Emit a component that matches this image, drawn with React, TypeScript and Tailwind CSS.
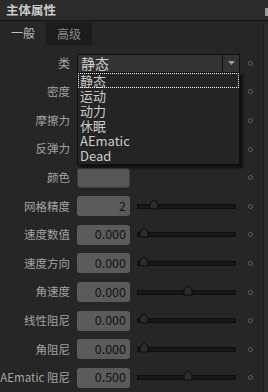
import React from "react";

type Row = {
  label: string;
  value?: string;
  slider?: number; // thumb x offset within track
  kind?: "input" | "color" | "hidden";
};

const rows: Row[] = [
  { label: "密度", kind: "hidden" },
  { label: "摩擦力", kind: "hidden" },
  { label: "反弹力", kind: "hidden" },
  { label: "颜色", kind: "color" },
  { label: "网格精度", value: "2", slider: 16 },
  { label: "速度数值", value: "0.000", slider: 6 },
  { label: "速度方向", value: "0.000", slider: 6 },
  { label: "角速度", value: "0.000", slider: 50 },
  { label: "线性阻尼", value: "0.000", slider: 6 },
  { label: "角阻尼", value: "0.000", slider: 6 },
  { label: "AEmatic 阻尼", value: "0.500", slider: 50 },
];

const options = ["静态", "运动", "动力", "休眠", "AEmatic", "Dead"];

function Dot() {
  return (
    <div className="w-[5px] h-[5px] rounded-full border border-[#5e5e5e] ml-[8px]" />
  );
}

function Slider({ pos }: { pos: number }) {
  return (
    <div className="relative w-[99px] h-[5px] ml-[7px] bg-[#171717] border border-[#0e0e0e]">
      <svg
        className="absolute -top-[6px]"
        style={{ left: pos - 5 }}
        width="10"
        height="11"
        viewBox="0 0 10 11"
      >
        <path d="M1 4.5 L5 0.8 L9 4.5 L9 10 L1 10 Z" fill="#2c2c2c" stroke="#0a0a0a" strokeWidth="1" />
      </svg>
    </div>
  );
}

export default function App() {
  return (
    <div
      className="relative w-[268px] h-[392px] overflow-hidden bg-[#262626] text-[12px]"
      style={{ fontFamily: '"Noto Sans CJK SC", "Noto Sans", sans-serif' }}
    >
      {/* title */}
      <div className="h-[21px] flex items-center px-[6px] bg-[#2b2b2b] border-b border-[#141414]">
        <span className="font-bold text-[#c9c9c9] text-[12.5px] leading-none">主体属性</span>
      </div>
      {/* tabs */}
      <div className="h-[24px] flex items-stretch bg-[#262626]">
        <div className="w-[46px] flex items-center justify-center text-[#bcbcbc]">一般</div>
        <div className="w-[46px] mt-[1px] flex items-center justify-center bg-[#1c1c1c] text-[#8a8a8a]">高级</div>
      </div>

      <div className="pt-[4px] pr-[8px]">
        {/* type dropdown row */}
        <div className="relative h-[28.6px] flex items-center">
          <div className="w-[72px] text-right pr-[2px] text-[#a3a3a3]">类</div>
          <div className="ml-[5px] w-[163px] h-[19px] flex bg-[#333333] border border-[#121212]">
            <div className="flex-1 flex items-center pl-[3px] text-[14px] text-[#cfcfcf] leading-none">静态</div>
            <div className="w-[17px] border-l border-[#121212] flex items-center justify-center">
              <svg width="7" height="4" viewBox="0 0 7 4">
                <path d="M0 0 H7 L3.5 4 Z" fill="#9a9a9a" />
              </svg>
            </div>
          </div>
          <Dot />
          {/* open list */}
          <div className="absolute left-[77px] top-[23px] z-10 w-[163px] pb-[1px] bg-[#242424] border border-[#0f0f0f] shadow-[3px_3px_2px_rgba(0,0,0,0.6)]">
            {options.map((o, i) => (
              <div
                key={o}
                className={
                  "h-[15px] flex items-center pl-[2px] text-[13px] leading-[13px] text-[#cccccc] " +
                  (i === 0 ? "outline-1 outline-dotted outline-white -outline-offset-1" : "")
                }
              >
                {o}
              </div>
            ))}
          </div>
        </div>

        {rows.map((r) => (
          <div key={r.label} className="h-[28.6px] flex items-center">
            <div className="w-[72px] text-right pr-[2px] text-[#a3a3a3] whitespace-nowrap text-[11.5px]">{r.label}</div>
            {r.kind === "hidden" ? (
              <div className="ml-[5px] w-[163px]" />
            ) : r.kind === "color" ? (
              <>
                <div className="ml-[5px] w-[53px] h-[20px] rounded-[3px] bg-[#575757] border border-[#3e3e3e]" />
                <div className="w-[110px]" />
              </>
            ) : (
              <>
                <div className="ml-[5px] w-[53px] h-[20px] rounded-[3px] bg-[#5b5b5b] flex items-center justify-end pr-[4px] text-[#141414] text-[12.5px]">
                  {r.value}
                </div>
                <Slider pos={r.slider ?? 6} />
                <div className="w-[4px]" />
              </>
            )}
            <Dot />
          </div>
        ))}
      </div>

      {/* right edge strip */}
      <div className="absolute right-0 top-[24px] bottom-0 w-[5px] bg-[#2b2b2b] border-l border-[#1d1d1d]" />
      <div className="absolute right-0 top-[8px] w-[3px] h-[8px] bg-[#9a9a9a]" />
    </div>
  );
}
